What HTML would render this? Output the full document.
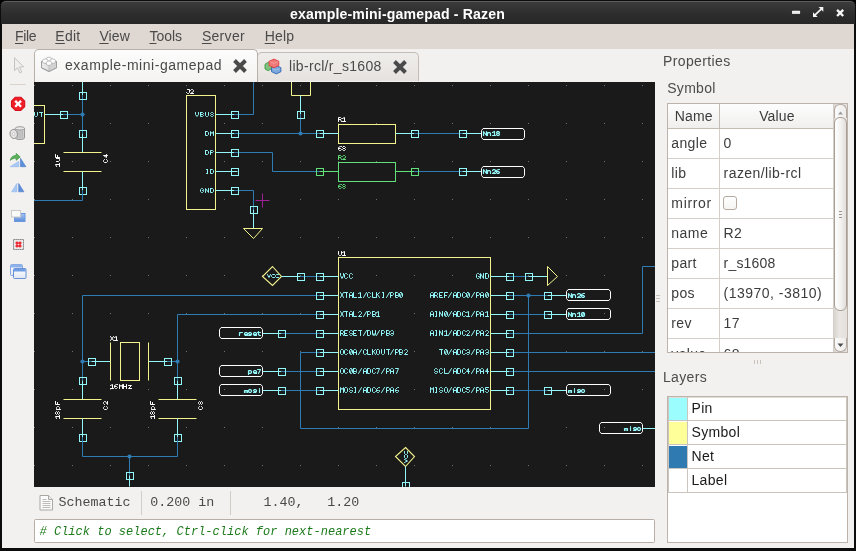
<!DOCTYPE html>
<html><head><meta charset="utf-8"><title>example-mini-gamepad - Razen</title>
<style>
*{box-sizing:border-box;margin:0;padding:0}
html,body{width:856px;height:551px;overflow:hidden;background:#000}
body{font-family:"Liberation Sans",sans-serif;font-size:14px;color:#3c3c3c;position:relative}
.abs{position:absolute}
#win{will-change:transform;position:absolute;left:0;top:0;width:856px;height:551px;background:#0c0c0c;border-radius:6px 6px 0 0;overflow:hidden}
#title{position:absolute;left:1px;top:1px;width:854px;height:23px;border-radius:5px 5px 0 0;background:linear-gradient(#3b3b3b,#2c2c2c 60%,#272727);border-top:1px solid #5c5c5c}
#title .t{position:absolute;left:0;width:793px;top:3.5px;text-align:center;color:#fff;font-weight:bold;font-size:14.1px;letter-spacing:0.15px;white-space:nowrap}
#menu{position:absolute;left:2px;top:24px;width:852px;height:25px;background:#dfd7d1}
#menu span{position:absolute;top:3.85px;font-size:14px;line-height:16px;color:#4a4a4a;white-space:nowrap}
#menu u{text-decoration:underline;text-decoration-thickness:1px;text-underline-offset:2px}
#body{position:absolute;left:2px;top:49px;width:852px;height:499px;background:#f2f1f0}
.txt{position:absolute;white-space:nowrap;color:#4a4a4a}
#cvwrap{position:absolute;left:34px;top:82px;width:621px;height:404.5px;background:#1a1a1a;overflow:hidden}
#cvwrap svg{display:block}
.tab{position:absolute;border:1px solid #b9b0a8;border-bottom:none;border-radius:5px 5px 0 0}
.cell{position:absolute;white-space:nowrap;color:#3c3c3c;font-size:14.6px}
</style></head><body>
<div id="win">
 <div id="title"><div class="t">example-mini-gamepad - Razen</div>
  <svg class="abs" style="left:788px;top:2px" width="64" height="18" viewBox="789 4 64 18">
   <defs><linearGradient id="mn" x1="0" y1="0" x2="0" y2="1"><stop offset="0" stop-color="#fbfbfb"/><stop offset="1" stop-color="#d4d4d4"/></linearGradient></defs>
   <rect x="792" y="10.8" width="8.100" height="3.300" rx="0.700" fill="url(#mn)"/>
   <g fill="#f6f6f6"><path d="M823.300 7h-4.700l4.700 4.700zM813 17h4.700l-4.700-4.700z"/></g>
   <path d="M821.200 9.100l-6.100 5.800" stroke="#f6f6f6" stroke-width="1.700"/>
   <path d="M837.100 9.900l6.100 6.100M843.200 9.900l-6.100 6.100" stroke="#f6f6f6" stroke-width="2.400"/>
  </svg>
 </div>
 <div id="menu">
  <span style="left:13px;letter-spacing:-0.31px"><u>F</u>ile</span>
  <span style="left:53.3px;letter-spacing:0.24px"><u>E</u>dit</span>
  <span style="left:97.4px;letter-spacing:0.13px"><u>V</u>iew</span>
  <span style="left:147.5px;letter-spacing:-0.03px"><u>T</u>ools</span>
  <span style="left:199.9px;letter-spacing:0.3px"><u>S</u>erver</span>
  <span style="left:262.7px;letter-spacing:0.18px"><u>H</u>elp</span>
 </div>
 <div id="body"></div>

 <!-- tabs -->
 <div class="tab" style="left:257px;top:52px;width:162px;height:29px;background:linear-gradient(#efedeb,#e6e2df);border-color:#c4bcb5"></div>
 <div class="tab" style="left:34px;top:49px;width:224px;height:33px;background:linear-gradient(#fcfcfc,#f4f3f2)"></div>
 <div class="txt" id="tab1" style="left:65px;top:56.65px;font-size:14px;line-height:16px;letter-spacing:0.54px">example-mini-gamepad</div>
 <div class="txt" id="tab2" style="left:289px;top:58.1px;font-size:14px;line-height:16px;letter-spacing:0.31px">lib-rcl/r_s1608</div>
 <svg class="abs" style="left:232px;top:59px" width="16" height="14" viewBox="0 0 16 14"><path d="M2.5 1.5l11 11M13.5 1.5l-11 11" stroke="#4a4a4a" stroke-width="3.9"/></svg>
 <svg class="abs" style="left:392px;top:60px" width="16" height="14" viewBox="0 0 16 14"><path d="M2.5 1.5l11 11M13.5 1.5l-11 11" stroke="#4a4a4a" stroke-width="3.9"/></svg>
 <svg class="abs" style="left:40px;top:56px" width="18" height="17" viewBox="40 56 18 17">
 <defs><linearGradient id="lg1" x1="0" y1="0" x2="1" y2="0"><stop offset="0" stop-color="#ededed"/><stop offset="1" stop-color="#cfcfcf"/></linearGradient></defs>
 <path d="M41.500 61.500l7.500-3.200 7.500 3.200v6.300l-7.500 3.700-7.500-3.700z" fill="url(#lg1)" stroke="#a9a9a9" stroke-width="1"/>
 <path d="M41.500 61.500l7.500 3.300 7.500-3.300-7.500-3.200z" fill="#f4f4f4" stroke="#b4b4b4" stroke-width=".6"/>
 <path d="M49 64.800l7.500-3.300v6.300l-7.500 3.700z" fill="#d2d2d2" stroke="none"/><path d="M49 64.800v6.700" stroke="#b4b4b4" stroke-width=".7"/><path d="M41.500 61.500l7.500-3.200 7.500 3.200v6.300l-7.500 3.700-7.500-3.700z" fill="none" stroke="#9f9f9f" stroke-width="1"/>
 <g fill="#fdfdfd" stroke="#a8a8a8" stroke-width=".7">
  <path d="M46.300 58.500v1.800a2.700 1.300 0 0 0 5.400 0v-1.800a2.700 1.300 0 0 0-5.400 0z"/>
  <path d="M42.600 60.300v1.800a2.700 1.300 0 0 0 5.400 0v-1.800a2.700 1.300 0 0 0-5.400 0z"/>
  <path d="M50 60.300v1.800a2.700 1.300 0 0 0 5.400 0v-1.800a2.700 1.300 0 0 0-5.400 0z"/>
  <path d="M46.300 62.300v1.800a2.700 1.300 0 0 0 5.400 0v-1.800a2.700 1.300 0 0 0-5.400 0z"/>
 </g>
</svg>
<svg class="abs" style="left:264px;top:58px" width="18" height="17" viewBox="264 58 18 17">
 <path d="M265 64.200l3.300-2 3.200 1.500v5l-3.300 2-3.200-1.700z" fill="#7fc07f" stroke="#3f9a45" stroke-width=".9"/>
 <path d="M271.500 68l5-2.300 4.400 2v4l-4.600 2.200-4.800-2.200z" fill="#7aa7dc" stroke="#2f66b3" stroke-width=".9"/>
 <path d="M269 61.300l5-2.200 4.800 2.200v4.200l-4.800 2.300-5-2.300z" fill="#f07a7a" stroke="#e03c3c" stroke-width=".9"/>
 <path d="M270 61.600l4 1.800 4-1.800" stroke="#f6a3a3" stroke-width=".8" fill="none"/>
 <path d="M272.500 68.600l3.400 1.500 4-1.700" stroke="#a9c7ea" stroke-width=".8" fill="none"/>
</svg>


 <svg class="abs" style="left:2px;top:50px" width="32" height="240" viewBox="2 50 32 240">
 <defs>
  <linearGradient id="tb1" x1="0" y1="0" x2="0" y2="1"><stop offset="0" stop-color="#a8c6f2"/><stop offset="1" stop-color="#5b8bd8"/></linearGradient>
  <linearGradient id="tb2" x1="0" y1="0" x2="0" y2="1"><stop offset="0" stop-color="#ffffff"/><stop offset="1" stop-color="#dfe6f3"/></linearGradient>
 </defs>
 <!-- pointer (insensitive) -->
 <path d="M14.500 57.800v12.800l3-2.800 2.300 5.100 2-.9-2.300-5 4.200-.2z" fill="#f0efee" stroke="#c5c3c1" stroke-width="1"/>
 <!-- separator -->
 <path d="M10 84.500h16" stroke="#d9d3cc"/>
 <!-- stop -->
 <path d="M15.37 97.20L20.83 97.20L24.70 101.07L24.70 106.53L20.83 110.40L15.37 110.40L11.50 106.53L11.50 101.07Z" fill="#ef2029" stroke="#d80f19" stroke-width="1.1" stroke-linejoin="round"/>
 <path d="M15.200 100.900l5.800 5.800M21 100.900l-5.800 5.800" stroke="#fff" stroke-width="2.300"/>
 <!-- trash -->
 <path d="M15.300 128.500v9.300c0 1 1.800 1.700 4.600 1.700s4.600-.7 4.600-1.700v-9.300z" fill="#cfcfcf" stroke="#8e8e8e" stroke-width=".9"/>
 <ellipse cx="19.900" cy="128.400" rx="4.700" ry="1.700" fill="#e9e9e9" stroke="#8e8e8e" stroke-width=".9"/>
 <path d="M17.800 131v7M20 131.300v7M22.200 131v7" stroke="#a6a6a6" stroke-width=".8"/>
 <ellipse cx="13.700" cy="134" rx="3.700" ry="4.600" fill="#e4e4e4" stroke="#8e8e8e" stroke-width=".9" transform="rotate(-12 13.700 134)"/>
 <ellipse cx="13.600" cy="134" rx="1.300" ry="1.700" fill="#f6f6f6" stroke="#b0b0b0" stroke-width=".5" transform="rotate(-12 13.600 134)"/>
 <!-- rotate -->
 <path d="M10.200 166.700h8.600v-5.300z" fill="#a9c8f4" stroke="#8db4ec" stroke-width=".6"/>
 <path d="M20.500 158.300v8.400h5.400z" fill="#5f8fdc" stroke="#4678c8" stroke-width=".6"/>
 <path d="M10.300 160.400c.5-3.600 3.300-5.100 5.900-4.900v-2.100l4 3.500-4 3.400v-2c-2-.2-4.100.4-5.900 2.100z" fill="#5cb35c" stroke="#3c9440" stroke-width=".7"/>
 <!-- mirror -->
 <path d="M11.700 191.800h5.200v-8.300z" fill="#a9c8f4" stroke="#8db4ec" stroke-width=".6"/>
 <path d="M18.700 183.500v8.300h5.200z" fill="#5f8fdc" stroke="#4678c8" stroke-width=".6"/>
 <!-- order -->
 <rect x="14.500" y="213.500" width="10.500" height="8" fill="url(#tb1)" stroke="#6a97e0" stroke-width="1"/>
 <rect x="11.500" y="210.500" width="9" height="6.500" fill="#fafafa" stroke="#c9c9c9" stroke-width="1"/>
 <!-- select area -->
 <rect x="13.500" y="239.500" width="10" height="10" fill="#e9e9e9" stroke="#666" stroke-width="1" stroke-dasharray="1.200 0.800"/>
 <path d="M15.500 243h6M15.500 246h6M17 241.500v6M20 241.500v6" stroke="#ee1c24" stroke-width="1.300"/>
 <!-- windows -->
 <rect x="10.500" y="264.500" width="12" height="11" rx="1" fill="url(#tb2)" stroke="#7da3e0" stroke-width=".9"/>
 <rect x="11" y="265" width="11" height="2.500" fill="#8db1ea"/>
 <rect x="13.500" y="268.500" width="12.500" height="10" rx="1" fill="url(#tb2)" stroke="#5b88d2" stroke-width=".9"/>
 <rect x="14" y="269" width="11.500" height="2.500" fill="#6f9ce2"/>
</svg>


 <div id="cvwrap"><svg id="cv" viewBox="34 82 621 404.5" width="621" height="404.5" fill="none" stroke-width="1" font-family="Liberation Mono, monospace" font-size="9.2" stroke-linecap="butt" stroke-linejoin="miter">
<path d="M34 85h1v1h-1zM34 123h1v1h-1zM34 161h1v1h-1zM34 199h1v1h-1zM34 237h1v1h-1zM34 275h1v1h-1zM34 313h1v1h-1zM34 351h1v1h-1zM34 389h1v1h-1zM34 427h1v1h-1zM34 465h1v1h-1zM72 85h1v1h-1zM72 123h1v1h-1zM72 161h1v1h-1zM72 199h1v1h-1zM72 237h1v1h-1zM72 275h1v1h-1zM72 313h1v1h-1zM72 351h1v1h-1zM72 389h1v1h-1zM72 427h1v1h-1zM72 465h1v1h-1zM110 85h1v1h-1zM110 123h1v1h-1zM110 161h1v1h-1zM110 199h1v1h-1zM110 237h1v1h-1zM110 275h1v1h-1zM110 313h1v1h-1zM110 351h1v1h-1zM110 389h1v1h-1zM110 427h1v1h-1zM110 465h1v1h-1zM148 85h1v1h-1zM148 123h1v1h-1zM148 161h1v1h-1zM148 199h1v1h-1zM148 237h1v1h-1zM148 275h1v1h-1zM148 313h1v1h-1zM148 351h1v1h-1zM148 389h1v1h-1zM148 427h1v1h-1zM148 465h1v1h-1zM186 85h1v1h-1zM186 123h1v1h-1zM186 161h1v1h-1zM186 199h1v1h-1zM186 237h1v1h-1zM186 275h1v1h-1zM186 313h1v1h-1zM186 351h1v1h-1zM186 389h1v1h-1zM186 427h1v1h-1zM186 465h1v1h-1zM224 85h1v1h-1zM224 123h1v1h-1zM224 161h1v1h-1zM224 199h1v1h-1zM224 237h1v1h-1zM224 275h1v1h-1zM224 313h1v1h-1zM224 351h1v1h-1zM224 389h1v1h-1zM224 427h1v1h-1zM224 465h1v1h-1zM262 85h1v1h-1zM262 123h1v1h-1zM262 161h1v1h-1zM262 199h1v1h-1zM262 237h1v1h-1zM262 275h1v1h-1zM262 313h1v1h-1zM262 351h1v1h-1zM262 389h1v1h-1zM262 427h1v1h-1zM262 465h1v1h-1zM300 85h1v1h-1zM300 123h1v1h-1zM300 161h1v1h-1zM300 199h1v1h-1zM300 237h1v1h-1zM300 275h1v1h-1zM300 313h1v1h-1zM300 351h1v1h-1zM300 389h1v1h-1zM300 427h1v1h-1zM300 465h1v1h-1zM338 85h1v1h-1zM338 123h1v1h-1zM338 161h1v1h-1zM338 199h1v1h-1zM338 237h1v1h-1zM338 275h1v1h-1zM338 313h1v1h-1zM338 351h1v1h-1zM338 389h1v1h-1zM338 427h1v1h-1zM338 465h1v1h-1zM376 85h1v1h-1zM376 123h1v1h-1zM376 161h1v1h-1zM376 199h1v1h-1zM376 237h1v1h-1zM376 275h1v1h-1zM376 313h1v1h-1zM376 351h1v1h-1zM376 389h1v1h-1zM376 427h1v1h-1zM376 465h1v1h-1zM414 85h1v1h-1zM414 123h1v1h-1zM414 161h1v1h-1zM414 199h1v1h-1zM414 237h1v1h-1zM414 275h1v1h-1zM414 313h1v1h-1zM414 351h1v1h-1zM414 389h1v1h-1zM414 427h1v1h-1zM414 465h1v1h-1zM452 85h1v1h-1zM452 123h1v1h-1zM452 161h1v1h-1zM452 199h1v1h-1zM452 237h1v1h-1zM452 275h1v1h-1zM452 313h1v1h-1zM452 351h1v1h-1zM452 389h1v1h-1zM452 427h1v1h-1zM452 465h1v1h-1zM490 85h1v1h-1zM490 123h1v1h-1zM490 161h1v1h-1zM490 199h1v1h-1zM490 237h1v1h-1zM490 275h1v1h-1zM490 313h1v1h-1zM490 351h1v1h-1zM490 389h1v1h-1zM490 427h1v1h-1zM490 465h1v1h-1zM528 85h1v1h-1zM528 123h1v1h-1zM528 161h1v1h-1zM528 199h1v1h-1zM528 237h1v1h-1zM528 275h1v1h-1zM528 313h1v1h-1zM528 351h1v1h-1zM528 389h1v1h-1zM528 427h1v1h-1zM528 465h1v1h-1zM566 85h1v1h-1zM566 123h1v1h-1zM566 161h1v1h-1zM566 199h1v1h-1zM566 237h1v1h-1zM566 275h1v1h-1zM566 313h1v1h-1zM566 351h1v1h-1zM566 389h1v1h-1zM566 427h1v1h-1zM566 465h1v1h-1zM604 85h1v1h-1zM604 123h1v1h-1zM604 161h1v1h-1zM604 199h1v1h-1zM604 237h1v1h-1zM604 275h1v1h-1zM604 313h1v1h-1zM604 351h1v1h-1zM604 389h1v1h-1zM604 427h1v1h-1zM604 465h1v1h-1zM642 85h1v1h-1zM642 123h1v1h-1zM642 161h1v1h-1zM642 199h1v1h-1zM642 237h1v1h-1zM642 275h1v1h-1zM642 313h1v1h-1zM642 351h1v1h-1zM642 389h1v1h-1zM642 427h1v1h-1zM642 465h1v1h-1z" fill="#6e6e6e" stroke="none"/>
<rect x="20" y="105.5" width="24.5" height="38" stroke="#f4f48e"/>
<path d="M30.5 112.5L31.5 112.5L32.5 113.5L32.5 115.5L31.5 116.5L30.5 116.5L29.5 115.5L29.5 113.5L30.5 112.5M34.5 112.5L34.5 115.5L35.5 116.5L36.5 116.5L37.5 115.5L37.5 112.5M39.5 112.5L42.5 112.5M41.5 112.5L41.5 116.5" stroke="#93f6f8" stroke-width="1" stroke-linecap="round" stroke-linejoin="round"/>
<path d="M44.5 114.5L63.5 114.5" stroke="#93f6f8" stroke-width="1"/>
<path d="M63.5 114.5L82.5 114.5" stroke="#2f7bb4" stroke-width="1"/>
<path d="M82.5 82L82.5 95.5" stroke="#93f6f8" stroke-width="1"/>
<path d="M82.5 95.5L82.5 133.5" stroke="#2f7bb4" stroke-width="1"/>
<path d="M82.5 133.5L82.5 152.5" stroke="#93f6f8" stroke-width="1"/>
<circle cx="82.5" cy="114.5" r="2.1" fill="#2f7bb4" stroke="none"/>
<rect x="60.5" y="111.5" width="7" height="7" stroke="#93f6f8"/>
<rect x="79.5" y="92.5" width="7" height="7" stroke="#93f6f8"/>
<rect x="79.5" y="130.5" width="7" height="7" stroke="#93f6f8"/>
<path d="M63.5 152.5L101.5 152.5" stroke="#f4f48e" stroke-width="1"/>
<path d="M63.5 171.5L101.5 171.5" stroke="#f4f48e" stroke-width="1"/>
<path d="M51.5 159.5L53.5 158.5L53.5 162.5M51.5 162.5L54.5 162.5M56.5 159.5L56.5 161.5L57.5 162.5L58.5 162.5L59.5 161.5M59.5 159.5L59.5 162.5M63.5 158.5L60.5 158.5L60.5 162.5M60.5 160.5L62.5 160.5" stroke="#ffffff" stroke-width="1" stroke-linecap="round" stroke-linejoin="round" transform="rotate(-90 57.5 160.5)"/>
<path d="M108.5 161.5L107.5 160.5L106.5 160.5L105.5 161.5L105.5 163.5L106.5 164.5L107.5 164.5L108.5 163.5M112.5 164.5L112.5 160.5L110.5 163.5L113.5 163.5" stroke="#ffffff" stroke-width="1" stroke-linecap="round" stroke-linejoin="round" transform="rotate(-90 105.5 162.5)"/>
<path d="M82.5 171.5L82.5 190.5" stroke="#93f6f8" stroke-width="1"/>
<rect x="79.5" y="187.5" width="7" height="7" stroke="#93f6f8"/>
<path d="M82.5 190.5L82.5 200.5L34 200.5" stroke="#2f7bb4" stroke-width="1"/>
<rect x="186.5" y="95.5" width="29" height="114" stroke="#f4f48e"/>
<path d="M187.5 89.5L189.5 89.5L189.5 92.5L188.5 93.5L187.5 93.5L186.5 92.5M190.5 90.5L191.5 89.5L192.5 89.5L193.5 90.5L193.5 91.5L190.5 93.5L193.5 93.5" stroke="#ffffff" stroke-width="1" stroke-linecap="round" stroke-linejoin="round"/>
<path d="M195.5 112.5L195.5 114.5L197 116.5L198.5 114.5L198.5 112.5M200.5 112.5L200.5 116.5L202.5 116.5L203.5 115.5L202.5 114.5L200.5 114.5M202.5 114.5L203.5 113.5L202.5 112.5L200.5 112.5M205.5 112.5L205.5 115.5L206.5 116.5L207.5 116.5L208.5 115.5L208.5 112.5M213.5 113.5L212.5 112.5L211.5 112.5L210.5 113.5L211.5 114.5L212.5 114.5L213.5 115.5L212.5 116.5L211.5 116.5L210.5 115.5" stroke="#93f6f8" stroke-width="1" stroke-linecap="round" stroke-linejoin="round"/>
<path d="M215.5 114.5L234.5 114.5" stroke="#93f6f8" stroke-width="1"/>
<path d="M205.5 131.5L205.5 135.5L207.5 135.5L208.5 134.5L208.5 132.5L207.5 131.5L205.5 131.5M210.5 135.5L210.5 131.5L212 133.5L213.5 131.5L213.5 135.5" stroke="#93f6f8" stroke-width="1" stroke-linecap="round" stroke-linejoin="round"/>
<path d="M215.5 133.5L234.5 133.5" stroke="#93f6f8" stroke-width="1"/>
<path d="M205.5 150.5L205.5 154.5L207.5 154.5L208.5 153.5L208.5 151.5L207.5 150.5L205.5 150.5M210.5 154.5L210.5 150.5L212.5 150.5L213.5 151.5L212.5 152.5L210.5 152.5" stroke="#93f6f8" stroke-width="1" stroke-linecap="round" stroke-linejoin="round"/>
<path d="M215.5 152.5L234.5 152.5" stroke="#93f6f8" stroke-width="1"/>
<path d="M206.5 169.5L207.5 169.5M207.5 169.5L207.5 173.5M206.5 173.5L207.5 173.5M210.5 169.5L210.5 173.5L212.5 173.5L213.5 172.5L213.5 170.5L212.5 169.5L210.5 169.5" stroke="#93f6f8" stroke-width="1" stroke-linecap="round" stroke-linejoin="round"/>
<path d="M215.5 171.5L234.5 171.5" stroke="#93f6f8" stroke-width="1"/>
<path d="M203.5 189.5L202.5 188.5L201.5 188.5L200.5 189.5L200.5 191.5L201.5 192.5L202.5 192.5L203.5 191.5L203.5 190.5L202.5 190.5M205.5 192.5L205.5 188.5L208.5 192.5L208.5 188.5M210.5 188.5L210.5 192.5L212.5 192.5L213.5 191.5L213.5 189.5L212.5 188.5L210.5 188.5" stroke="#93f6f8" stroke-width="1" stroke-linecap="round" stroke-linejoin="round"/>
<path d="M215.5 190.5L234.5 190.5" stroke="#93f6f8" stroke-width="1"/>
<path d="M234.5 114.5L253.5 114.5L253.5 82" stroke="#2f7bb4" stroke-width="1"/>
<path d="M234.5 133.5L319.5 133.5" stroke="#2f7bb4" stroke-width="1"/>
<path d="M234.5 152.5L272.5 152.5L272.5 171.5L319.5 171.5" stroke="#2f7bb4" stroke-width="1"/>
<path d="M234.5 190.5L253.5 190.5L253.5 209.5" stroke="#2f7bb4" stroke-width="1"/>
<rect x="231.5" y="111.5" width="7" height="7" stroke="#93f6f8"/>
<rect x="231.5" y="130.5" width="7" height="7" stroke="#93f6f8"/>
<rect x="231.5" y="149.5" width="7" height="7" stroke="#93f6f8"/>
<rect x="231.5" y="168.5" width="7" height="7" stroke="#93f6f8"/>
<rect x="231.5" y="187.5" width="7" height="7" stroke="#93f6f8"/>
<path d="M233.5 171.5L237.5 171.5" stroke="#93f6f8" stroke-width="1"/>
<path d="M291.5 82L291.5 95.5L310.5 95.5L310.5 82" stroke="#f4f48e" stroke-width="1"/>
<path d="M300.5 95.5L300.5 114.5" stroke="#93f6f8" stroke-width="1"/>
<path d="M300.5 114.5L300.5 133.5" stroke="#2f7bb4" stroke-width="1"/>
<rect x="297.5" y="111.5" width="7" height="7" stroke="#93f6f8"/>
<circle cx="300.5" cy="133.5" r="2.1" fill="#2f7bb4" stroke="none"/>
<path d="M253.5 209.5L253.5 228.5" stroke="#93f6f8" stroke-width="1"/>
<rect x="250.5" y="206.5" width="7" height="7" stroke="#93f6f8"/>
<path d="M243.5 228.5L262.5 228.5L253.5 238.5Z" stroke="#f4f48e" stroke-width="1"/>
<path d="M255.5 200.5L269.5 200.5" stroke="#a0209a" stroke-width="1"/>
<path d="M262.5 193.5L262.5 207.5" stroke="#a0209a" stroke-width="1"/>
<rect x="338.5" y="124.5" width="57" height="19" stroke="#f4f48e"/>
<path d="M338.5 121.5L338.5 117.5L340.5 117.5L341.5 118.5L340.5 119.5L338.5 119.5M340.5 119.5L341.5 121.5M342.5 118.5L344.5 117.5L344.5 121.5M342.5 121.5L345.5 121.5" stroke="#ffffff" stroke-width="1" stroke-linecap="round" stroke-linejoin="round"/>
<path d="M341.5 146.5L340.5 146.5L338.5 147.5L338.5 149.5L339.5 150.5L340.5 150.5L341.5 149.5L340.5 148.5L338.5 148.5M343.5 146.5L344.5 146.5L345.5 147.5L344.5 148.5L343.5 148.5L342.5 147.5L343.5 146.5M343.5 148.5L342.5 149.5L343.5 150.5L344.5 150.5L345.5 149.5L344.5 148.5" stroke="#ffffff" stroke-width="1" stroke-linecap="round" stroke-linejoin="round"/>
<path d="M319.5 133.5L338.5 133.5" stroke="#93f6f8" stroke-width="1"/>
<path d="M395.5 133.5L414.5 133.5" stroke="#93f6f8" stroke-width="1"/>
<path d="M414.5 133.5L462.5 133.5" stroke="#2f7bb4" stroke-width="1"/>
<path d="M462.5 133.5L481.5 133.5" stroke="#93f6f8" stroke-width="1"/>
<rect x="316.5" y="130.5" width="7" height="7" stroke="#93f6f8"/>
<rect x="411.5" y="130.5" width="7" height="7" stroke="#93f6f8"/>
<rect x="459.5" y="130.5" width="7" height="7" stroke="#93f6f8"/>
<path d="M483.1 128.5L522.9 128.5L524.5 130.6L524.5 137.4L522.9 139.5L483.1 139.5L481.5 137.4L481.5 130.6Z" stroke="#ffffff" stroke-linejoin="round"/>
<path d="M483.5 135.5L483.5 131.5L486.5 135.5L486.5 131.5M487.5 135.5L487.5 132.5M487.5 133.5L488.5 132.5L489.5 132.5L490.5 133.5L490.5 135.5M492.5 132.5L494.5 131.5L494.5 135.5M492.5 135.5L495.5 135.5M497.5 131.5L498.5 131.5L499.5 132.5L498.5 133.5L497.5 133.5L496.5 132.5L497.5 131.5M497.5 133.5L496.5 134.5L497.5 135.5L498.5 135.5L499.5 134.5L498.5 133.5" stroke="#93f6f8" stroke-width="1.2" stroke-linecap="round" stroke-linejoin="round"/>
<rect x="338.5" y="162.5" width="57" height="19" stroke="#62e07a"/>
<path d="M338.5 159.5L338.5 155.5L340.5 155.5L341.5 156.5L340.5 157.5L338.5 157.5M340.5 157.5L341.5 159.5M342.5 156.5L343.5 155.5L344.5 155.5L345.5 156.5L345.5 157.5L342.5 159.5L345.5 159.5" stroke="#62e07a" stroke-width="1" stroke-linecap="round" stroke-linejoin="round"/>
<path d="M341.5 184.5L340.5 184.5L338.5 185.5L338.5 187.5L339.5 188.5L340.5 188.5L341.5 187.5L340.5 186.5L338.5 186.5M343.5 184.5L344.5 184.5L345.5 185.5L344.5 186.5L343.5 186.5L342.5 185.5L343.5 184.5M343.5 186.5L342.5 187.5L343.5 188.5L344.5 188.5L345.5 187.5L344.5 186.5" stroke="#62e07a" stroke-width="1" stroke-linecap="round" stroke-linejoin="round"/>
<path d="M319.5 171.5L338.5 171.5" stroke="#62e07a" stroke-width="1"/>
<path d="M395.5 171.5L414.5 171.5" stroke="#62e07a" stroke-width="1"/>
<path d="M414.5 171.5L462.5 171.5" stroke="#2f7bb4" stroke-width="1"/>
<path d="M462.5 171.5L481.5 171.5" stroke="#93f6f8" stroke-width="1"/>
<rect x="316.5" y="168.5" width="7" height="7" stroke="#62e07a"/>
<rect x="411.5" y="168.5" width="7" height="7" stroke="#62e07a"/>
<rect x="459.5" y="168.5" width="7" height="7" stroke="#93f6f8"/>
<path d="M483.1 166.5L522.9 166.5L524.5 168.6L524.5 175.4L522.9 177.5L483.1 177.5L481.5 175.4L481.5 168.6Z" stroke="#ffffff" stroke-linejoin="round"/>
<path d="M483.5 173.5L483.5 169.5L486.5 173.5L486.5 169.5M487.5 173.5L487.5 170.5M487.5 171.5L488.5 170.5L489.5 170.5L490.5 171.5L490.5 173.5M492.5 170.5L493.5 169.5L494.5 169.5L495.5 170.5L495.5 171.5L492.5 173.5L495.5 173.5M499.5 169.5L498.5 169.5L496.5 170.5L496.5 172.5L497.5 173.5L498.5 173.5L499.5 172.5L498.5 171.5L496.5 171.5" stroke="#93f6f8" stroke-width="1.2" stroke-linecap="round" stroke-linejoin="round"/>
<rect x="338.5" y="257.5" width="152" height="152" stroke="#f4f48e"/>
<path d="M338.5 251.5L338.5 254.5L339.5 255.5L340.5 255.5L341.5 254.5L341.5 251.5M342.5 252.5L344.5 251.5L344.5 255.5M342.5 255.5L345.5 255.5" stroke="#ffffff" stroke-width="1" stroke-linecap="round" stroke-linejoin="round"/>
<path d="M340.5 273.5L340.5 275.5L342 278.5L343.5 275.5L343.5 273.5M347.5 274.5L346.5 273.5L345.5 273.5L344.5 274.5L344.5 277.5L345.5 278.5L346.5 278.5L347.5 277.5M352.5 274.5L351.5 273.5L350.5 273.5L349.5 274.5L349.5 277.5L350.5 278.5L351.5 278.5L352.5 277.5" stroke="#93f6f8" stroke-width="1" stroke-linecap="round" stroke-linejoin="round"/>
<path d="M479.5 274.5L478.5 273.5L477.5 273.5L476.5 274.5L476.5 277.5L477.5 278.5L478.5 278.5L479.5 277.5L479.5 276.5L478.5 276.5M480.5 278.5L480.5 273.5L483.5 278.5L483.5 273.5M485.5 273.5L485.5 278.5L487.5 278.5L488.5 277.5L488.5 274.5L487.5 273.5L485.5 273.5" stroke="#93f6f8" stroke-width="1" stroke-linecap="round" stroke-linejoin="round"/>
<path d="M319.5 276.5L338.5 276.5" stroke="#93f6f8" stroke-width="1"/>
<path d="M490.5 276.5L509.5 276.5" stroke="#93f6f8" stroke-width="1"/>
<path d="M340.5 292.5L343.5 297.5M343.5 292.5L340.5 297.5M344.5 292.5L347.5 292.5M346.5 292.5L346.5 297.5M349.5 297.5L349.5 293.5L350.5 292.5L351.5 292.5L352.5 293.5L352.5 297.5M349.5 295.5L352.5 295.5M353.5 292.5L353.5 297.5L356.5 297.5M358.5 293.5L360.5 292.5L360.5 297.5M358.5 297.5L361.5 297.5M363.5 297.5L366.5 292.5M370.5 293.5L369.5 292.5L368.5 292.5L367.5 293.5L367.5 296.5L368.5 297.5L369.5 297.5L370.5 296.5M372.5 292.5L372.5 297.5L375.5 297.5M376.5 292.5L376.5 297.5M379.5 292.5L376.5 295.5M377.5 294.5L379.5 297.5M382.5 292.5L383.5 292.5M383.5 292.5L383.5 297.5M382.5 297.5L383.5 297.5M386.5 297.5L389.5 292.5M390.5 297.5L390.5 292.5L392.5 292.5L393.5 293.5L393.5 294.5L392.5 295.5L390.5 295.5M395.5 292.5L395.5 297.5L397.5 297.5L398.5 296.5L398.5 295.5L397.5 295.5L395.5 295.5M397.5 295.5L398.5 294.5L398.5 293.5L397.5 292.5L395.5 292.5M400.5 292.5L401.5 292.5L402.5 293.5L402.5 296.5L401.5 297.5L400.5 297.5L399.5 296.5L399.5 293.5L400.5 292.5M400.5 296.5L401.5 293.5" stroke="#93f6f8" stroke-width="1" stroke-linecap="round" stroke-linejoin="round"/>
<path d="M430.5 297.5L430.5 293.5L431.5 292.5L432.5 292.5L433.5 293.5L433.5 297.5M430.5 295.5L433.5 295.5M434.5 297.5L434.5 292.5L436.5 292.5L437.5 293.5L437.5 294.5L436.5 295.5L434.5 295.5M436.5 295.5L437.5 297.5M442.5 292.5L439.5 292.5L439.5 297.5L442.5 297.5M439.5 295.5L441.5 295.5M447.5 292.5L444.5 292.5L444.5 297.5M444.5 295.5L446.5 295.5M448.5 297.5L451.5 292.5M453.5 297.5L453.5 293.5L454.5 292.5L455.5 292.5L456.5 293.5L456.5 297.5M453.5 295.5L456.5 295.5M457.5 292.5L457.5 297.5L459.5 297.5L460.5 296.5L460.5 293.5L459.5 292.5L457.5 292.5M465.5 293.5L464.5 292.5L463.5 292.5L462.5 293.5L462.5 296.5L463.5 297.5L464.5 297.5L465.5 296.5M467.5 292.5L468.5 292.5L469.5 293.5L469.5 296.5L468.5 297.5L467.5 297.5L466.5 296.5L466.5 293.5L467.5 292.5M467.5 296.5L468.5 293.5M471.5 297.5L474.5 292.5M476.5 297.5L476.5 292.5L478.5 292.5L479.5 293.5L479.5 294.5L478.5 295.5L476.5 295.5M480.5 297.5L480.5 293.5L481.5 292.5L482.5 292.5L483.5 293.5L483.5 297.5M480.5 295.5L483.5 295.5M486.5 292.5L487.5 292.5L488.5 293.5L488.5 296.5L487.5 297.5L486.5 297.5L485.5 296.5L485.5 293.5L486.5 292.5M486.5 296.5L487.5 293.5" stroke="#93f6f8" stroke-width="1" stroke-linecap="round" stroke-linejoin="round"/>
<path d="M319.5 295.5L338.5 295.5" stroke="#93f6f8" stroke-width="1"/>
<path d="M490.5 295.5L509.5 295.5" stroke="#93f6f8" stroke-width="1"/>
<path d="M340.5 311.5L343.5 316.5M343.5 311.5L340.5 316.5M344.5 311.5L347.5 311.5M346.5 311.5L346.5 316.5M349.5 316.5L349.5 312.5L350.5 311.5L351.5 311.5L352.5 312.5L352.5 316.5M349.5 314.5L352.5 314.5M353.5 311.5L353.5 316.5L356.5 316.5M358.5 312.5L359.5 311.5L360.5 311.5L361.5 312.5L361.5 313.5L358.5 316.5L361.5 316.5M363.5 316.5L366.5 311.5M367.5 316.5L367.5 311.5L369.5 311.5L370.5 312.5L370.5 313.5L369.5 314.5L367.5 314.5M372.5 311.5L372.5 316.5L374.5 316.5L375.5 315.5L375.5 314.5L374.5 314.5L372.5 314.5M374.5 314.5L375.5 313.5L375.5 312.5L374.5 311.5L372.5 311.5M376.5 312.5L378.5 311.5L378.5 316.5M376.5 316.5L379.5 316.5" stroke="#93f6f8" stroke-width="1" stroke-linecap="round" stroke-linejoin="round"/>
<path d="M430.5 316.5L430.5 312.5L431.5 311.5L432.5 311.5L433.5 312.5L433.5 316.5M430.5 314.5L433.5 314.5M435.5 311.5L436.5 311.5M436.5 311.5L436.5 316.5M435.5 316.5L436.5 316.5M439.5 316.5L439.5 311.5L442.5 316.5L442.5 311.5M445.5 311.5L446.5 311.5L447.5 312.5L447.5 315.5L446.5 316.5L445.5 316.5L444.5 315.5L444.5 312.5L445.5 311.5M445.5 315.5L446.5 312.5M448.5 316.5L451.5 311.5M453.5 316.5L453.5 312.5L454.5 311.5L455.5 311.5L456.5 312.5L456.5 316.5M453.5 314.5L456.5 314.5M457.5 311.5L457.5 316.5L459.5 316.5L460.5 315.5L460.5 312.5L459.5 311.5L457.5 311.5M465.5 312.5L464.5 311.5L463.5 311.5L462.5 312.5L462.5 315.5L463.5 316.5L464.5 316.5L465.5 315.5M466.5 312.5L468.5 311.5L468.5 316.5M466.5 316.5L469.5 316.5M471.5 316.5L474.5 311.5M476.5 316.5L476.5 311.5L478.5 311.5L479.5 312.5L479.5 313.5L478.5 314.5L476.5 314.5M480.5 316.5L480.5 312.5L481.5 311.5L482.5 311.5L483.5 312.5L483.5 316.5M480.5 314.5L483.5 314.5M485.5 312.5L487.5 311.5L487.5 316.5M485.5 316.5L488.5 316.5" stroke="#93f6f8" stroke-width="1" stroke-linecap="round" stroke-linejoin="round"/>
<path d="M319.5 314.5L338.5 314.5" stroke="#93f6f8" stroke-width="1"/>
<path d="M490.5 314.5L509.5 314.5" stroke="#93f6f8" stroke-width="1"/>
<path d="M340.5 335.5L340.5 330.5L342.5 330.5L343.5 331.5L343.5 332.5L342.5 333.5L340.5 333.5M342.5 333.5L343.5 335.5M347.5 330.5L344.5 330.5L344.5 335.5L347.5 335.5M344.5 333.5L346.5 333.5M352.5 331.5L351.5 330.5L350.5 330.5L349.5 331.5L349.5 332.5L350.5 333.5L351.5 333.5L352.5 333.5L352.5 334.5L351.5 335.5L350.5 335.5L349.5 334.5M356.5 330.5L353.5 330.5L353.5 335.5L356.5 335.5M353.5 333.5L355.5 333.5M358.5 330.5L361.5 330.5M360.5 330.5L360.5 335.5M363.5 335.5L366.5 330.5M367.5 330.5L367.5 335.5L369.5 335.5L370.5 334.5L370.5 331.5L369.5 330.5L367.5 330.5M372.5 330.5L372.5 334.5L373.25 335.5L374 333.5L374.75 335.5L375.5 334.5L375.5 330.5M376.5 335.5L379.5 330.5M381.5 335.5L381.5 330.5L383.5 330.5L384.5 331.5L384.5 332.5L383.5 333.5L381.5 333.5M386.5 330.5L386.5 335.5L388.5 335.5L389.5 334.5L389.5 333.5L388.5 333.5L386.5 333.5M388.5 333.5L389.5 332.5L389.5 331.5L388.5 330.5L386.5 330.5M390.5 331.5L391.5 330.5L392.5 330.5L393.5 331.5L393.5 332.5L392.5 333.5L391.5 333.5M392.5 333.5L393.5 333.5L393.5 334.5L392.5 335.5L391.5 335.5L390.5 334.5" stroke="#93f6f8" stroke-width="1" stroke-linecap="round" stroke-linejoin="round"/>
<path d="M430.5 335.5L430.5 331.5L431.5 330.5L432.5 330.5L433.5 331.5L433.5 335.5M430.5 333.5L433.5 333.5M435.5 330.5L436.5 330.5M436.5 330.5L436.5 335.5M435.5 335.5L436.5 335.5M439.5 335.5L439.5 330.5L442.5 335.5L442.5 330.5M444.5 331.5L446.5 330.5L446.5 335.5M444.5 335.5L447.5 335.5M448.5 335.5L451.5 330.5M453.5 335.5L453.5 331.5L454.5 330.5L455.5 330.5L456.5 331.5L456.5 335.5M453.5 333.5L456.5 333.5M457.5 330.5L457.5 335.5L459.5 335.5L460.5 334.5L460.5 331.5L459.5 330.5L457.5 330.5M465.5 331.5L464.5 330.5L463.5 330.5L462.5 331.5L462.5 334.5L463.5 335.5L464.5 335.5L465.5 334.5M466.5 331.5L467.5 330.5L468.5 330.5L469.5 331.5L469.5 332.5L466.5 335.5L469.5 335.5M471.5 335.5L474.5 330.5M476.5 335.5L476.5 330.5L478.5 330.5L479.5 331.5L479.5 332.5L478.5 333.5L476.5 333.5M480.5 335.5L480.5 331.5L481.5 330.5L482.5 330.5L483.5 331.5L483.5 335.5M480.5 333.5L483.5 333.5M485.5 331.5L486.5 330.5L487.5 330.5L488.5 331.5L488.5 332.5L485.5 335.5L488.5 335.5" stroke="#93f6f8" stroke-width="1" stroke-linecap="round" stroke-linejoin="round"/>
<path d="M319.5 333.5L338.5 333.5" stroke="#93f6f8" stroke-width="1"/>
<path d="M490.5 333.5L509.5 333.5" stroke="#93f6f8" stroke-width="1"/>
<path d="M341.5 349.5L342.5 349.5L343.5 350.5L343.5 353.5L342.5 354.5L341.5 354.5L340.5 353.5L340.5 350.5L341.5 349.5M347.5 350.5L346.5 349.5L345.5 349.5L344.5 350.5L344.5 353.5L345.5 354.5L346.5 354.5L347.5 353.5M350.5 349.5L351.5 349.5L352.5 350.5L352.5 353.5L351.5 354.5L350.5 354.5L349.5 353.5L349.5 350.5L350.5 349.5M350.5 353.5L351.5 350.5M353.5 354.5L353.5 350.5L354.5 349.5L355.5 349.5L356.5 350.5L356.5 354.5M353.5 352.5L356.5 352.5M358.5 354.5L361.5 349.5M366.5 350.5L365.5 349.5L364.5 349.5L363.5 350.5L363.5 353.5L364.5 354.5L365.5 354.5L366.5 353.5M367.5 349.5L367.5 354.5L370.5 354.5M372.5 349.5L372.5 354.5M375.5 349.5L372.5 352.5M373.5 351.5L375.5 354.5M377.5 349.5L378.5 349.5L379.5 350.5L379.5 353.5L378.5 354.5L377.5 354.5L376.5 353.5L376.5 350.5L377.5 349.5M381.5 349.5L381.5 353.5L382.5 354.5L383.5 354.5L384.5 353.5L384.5 349.5M386.5 349.5L389.5 349.5M388.5 349.5L388.5 354.5M390.5 354.5L393.5 349.5M395.5 354.5L395.5 349.5L397.5 349.5L398.5 350.5L398.5 351.5L397.5 352.5L395.5 352.5M399.5 349.5L399.5 354.5L401.5 354.5L402.5 353.5L402.5 352.5L401.5 352.5L399.5 352.5M401.5 352.5L402.5 351.5L402.5 350.5L401.5 349.5L399.5 349.5M404.5 350.5L405.5 349.5L406.5 349.5L407.5 350.5L407.5 351.5L404.5 354.5L407.5 354.5" stroke="#93f6f8" stroke-width="1" stroke-linecap="round" stroke-linejoin="round"/>
<path d="M439.5 349.5L442.5 349.5M441.5 349.5L441.5 354.5M445.5 349.5L446.5 349.5L447.5 350.5L447.5 353.5L446.5 354.5L445.5 354.5L444.5 353.5L444.5 350.5L445.5 349.5M445.5 353.5L446.5 350.5M448.5 354.5L451.5 349.5M453.5 354.5L453.5 350.5L454.5 349.5L455.5 349.5L456.5 350.5L456.5 354.5M453.5 352.5L456.5 352.5M457.5 349.5L457.5 354.5L459.5 354.5L460.5 353.5L460.5 350.5L459.5 349.5L457.5 349.5M465.5 350.5L464.5 349.5L463.5 349.5L462.5 350.5L462.5 353.5L463.5 354.5L464.5 354.5L465.5 353.5M466.5 350.5L467.5 349.5L468.5 349.5L469.5 350.5L469.5 351.5L468.5 352.5L467.5 352.5M468.5 352.5L469.5 352.5L469.5 353.5L468.5 354.5L467.5 354.5L466.5 353.5M471.5 354.5L474.5 349.5M476.5 354.5L476.5 349.5L478.5 349.5L479.5 350.5L479.5 351.5L478.5 352.5L476.5 352.5M480.5 354.5L480.5 350.5L481.5 349.5L482.5 349.5L483.5 350.5L483.5 354.5M480.5 352.5L483.5 352.5M485.5 350.5L486.5 349.5L487.5 349.5L488.5 350.5L488.5 351.5L487.5 352.5L486.5 352.5M487.5 352.5L488.5 352.5L488.5 353.5L487.5 354.5L486.5 354.5L485.5 353.5" stroke="#93f6f8" stroke-width="1" stroke-linecap="round" stroke-linejoin="round"/>
<path d="M319.5 352.5L338.5 352.5" stroke="#93f6f8" stroke-width="1"/>
<path d="M490.5 352.5L509.5 352.5" stroke="#93f6f8" stroke-width="1"/>
<path d="M341.5 368.5L342.5 368.5L343.5 369.5L343.5 372.5L342.5 373.5L341.5 373.5L340.5 372.5L340.5 369.5L341.5 368.5M347.5 369.5L346.5 368.5L345.5 368.5L344.5 369.5L344.5 372.5L345.5 373.5L346.5 373.5L347.5 372.5M350.5 368.5L351.5 368.5L352.5 369.5L352.5 372.5L351.5 373.5L350.5 373.5L349.5 372.5L349.5 369.5L350.5 368.5M350.5 372.5L351.5 369.5M353.5 368.5L353.5 373.5L355.5 373.5L356.5 372.5L356.5 371.5L355.5 371.5L353.5 371.5M355.5 371.5L356.5 370.5L356.5 369.5L355.5 368.5L353.5 368.5M358.5 373.5L361.5 368.5M363.5 373.5L363.5 369.5L364.5 368.5L365.5 368.5L366.5 369.5L366.5 373.5M363.5 371.5L366.5 371.5M367.5 368.5L367.5 373.5L369.5 373.5L370.5 372.5L370.5 369.5L369.5 368.5L367.5 368.5M375.5 369.5L374.5 368.5L373.5 368.5L372.5 369.5L372.5 372.5L373.5 373.5L374.5 373.5L375.5 372.5M376.5 368.5L379.5 368.5L377.5 373.5M381.5 373.5L384.5 368.5M386.5 373.5L386.5 368.5L388.5 368.5L389.5 369.5L389.5 370.5L388.5 371.5L386.5 371.5M390.5 373.5L390.5 369.5L391.5 368.5L392.5 368.5L393.5 369.5L393.5 373.5M390.5 371.5L393.5 371.5M395.5 368.5L398.5 368.5L396.5 373.5" stroke="#93f6f8" stroke-width="1" stroke-linecap="round" stroke-linejoin="round"/>
<path d="M437.5 369.5L436.5 368.5L435.5 368.5L434.5 369.5L434.5 370.5L435.5 371.5L436.5 371.5L437.5 371.5L437.5 372.5L436.5 373.5L435.5 373.5L434.5 372.5M442.5 369.5L441.5 368.5L440.5 368.5L439.5 369.5L439.5 372.5L440.5 373.5L441.5 373.5L442.5 372.5M444.5 368.5L444.5 373.5L447.5 373.5M448.5 373.5L451.5 368.5M453.5 373.5L453.5 369.5L454.5 368.5L455.5 368.5L456.5 369.5L456.5 373.5M453.5 371.5L456.5 371.5M457.5 368.5L457.5 373.5L459.5 373.5L460.5 372.5L460.5 369.5L459.5 368.5L457.5 368.5M465.5 369.5L464.5 368.5L463.5 368.5L462.5 369.5L462.5 372.5L463.5 373.5L464.5 373.5L465.5 372.5M468.5 373.5L468.5 368.5L466.5 371.5L469.5 371.5M471.5 373.5L474.5 368.5M476.5 373.5L476.5 368.5L478.5 368.5L479.5 369.5L479.5 370.5L478.5 371.5L476.5 371.5M480.5 373.5L480.5 369.5L481.5 368.5L482.5 368.5L483.5 369.5L483.5 373.5M480.5 371.5L483.5 371.5M487.5 373.5L487.5 368.5L485.5 371.5L488.5 371.5" stroke="#93f6f8" stroke-width="1" stroke-linecap="round" stroke-linejoin="round"/>
<path d="M319.5 371.5L338.5 371.5" stroke="#93f6f8" stroke-width="1"/>
<path d="M490.5 371.5L509.5 371.5" stroke="#93f6f8" stroke-width="1"/>
<path d="M340.5 392.5L340.5 387.5L342 389.5L343.5 387.5L343.5 392.5M345.5 387.5L346.5 387.5L347.5 388.5L347.5 391.5L346.5 392.5L345.5 392.5L344.5 391.5L344.5 388.5L345.5 387.5M352.5 388.5L351.5 387.5L350.5 387.5L349.5 388.5L349.5 389.5L350.5 390.5L351.5 390.5L352.5 390.5L352.5 391.5L351.5 392.5L350.5 392.5L349.5 391.5M354.5 387.5L355.5 387.5M355.5 387.5L355.5 392.5M354.5 392.5L355.5 392.5M358.5 392.5L361.5 387.5M363.5 392.5L363.5 388.5L364.5 387.5L365.5 387.5L366.5 388.5L366.5 392.5M363.5 390.5L366.5 390.5M367.5 387.5L367.5 392.5L369.5 392.5L370.5 391.5L370.5 388.5L369.5 387.5L367.5 387.5M375.5 388.5L374.5 387.5L373.5 387.5L372.5 388.5L372.5 391.5L373.5 392.5L374.5 392.5L375.5 391.5M379.5 387.5L378.5 387.5L376.5 389.5L376.5 391.5L377.5 392.5L378.5 392.5L379.5 391.5L379.5 390.5L378.5 390.5L376.5 390.5M381.5 392.5L384.5 387.5M386.5 392.5L386.5 387.5L388.5 387.5L389.5 388.5L389.5 389.5L388.5 390.5L386.5 390.5M390.5 392.5L390.5 388.5L391.5 387.5L392.5 387.5L393.5 388.5L393.5 392.5M390.5 390.5L393.5 390.5M398.5 387.5L397.5 387.5L395.5 389.5L395.5 391.5L396.5 392.5L397.5 392.5L398.5 391.5L398.5 390.5L397.5 390.5L395.5 390.5" stroke="#93f6f8" stroke-width="1" stroke-linecap="round" stroke-linejoin="round"/>
<path d="M430.5 392.5L430.5 387.5L432 389.5L433.5 387.5L433.5 392.5M435.5 387.5L436.5 387.5M436.5 387.5L436.5 392.5M435.5 392.5L436.5 392.5M442.5 388.5L441.5 387.5L440.5 387.5L439.5 388.5L439.5 389.5L440.5 390.5L441.5 390.5L442.5 390.5L442.5 391.5L441.5 392.5L440.5 392.5L439.5 391.5M445.5 387.5L446.5 387.5L447.5 388.5L447.5 391.5L446.5 392.5L445.5 392.5L444.5 391.5L444.5 388.5L445.5 387.5M448.5 392.5L451.5 387.5M453.5 392.5L453.5 388.5L454.5 387.5L455.5 387.5L456.5 388.5L456.5 392.5M453.5 390.5L456.5 390.5M457.5 387.5L457.5 392.5L459.5 392.5L460.5 391.5L460.5 388.5L459.5 387.5L457.5 387.5M465.5 388.5L464.5 387.5L463.5 387.5L462.5 388.5L462.5 391.5L463.5 392.5L464.5 392.5L465.5 391.5M469.5 387.5L466.5 387.5L466.5 389.5L468.5 389.5L469.5 390.5L469.5 391.5L468.5 392.5L467.5 392.5L466.5 391.5M471.5 392.5L474.5 387.5M476.5 392.5L476.5 387.5L478.5 387.5L479.5 388.5L479.5 389.5L478.5 390.5L476.5 390.5M480.5 392.5L480.5 388.5L481.5 387.5L482.5 387.5L483.5 388.5L483.5 392.5M480.5 390.5L483.5 390.5M488.5 387.5L485.5 387.5L485.5 389.5L487.5 389.5L488.5 390.5L488.5 391.5L487.5 392.5L486.5 392.5L485.5 391.5" stroke="#93f6f8" stroke-width="1" stroke-linecap="round" stroke-linejoin="round"/>
<path d="M319.5 390.5L338.5 390.5" stroke="#93f6f8" stroke-width="1"/>
<path d="M490.5 390.5L509.5 390.5" stroke="#93f6f8" stroke-width="1"/>
<path d="M272.5 266.5L281.5 276.5L272.5 285.5L262.5 276.5Z" stroke="#f4f48e" stroke-width="1.1"/>
<path d="M267.5 274.5L269 277.5L270.5 274.5M274.5 274.5L272.5 274.5L271.5 275.5L271.5 276.5L272.5 277.5L274.5 277.5M278.5 274.5L276.5 274.5L275.5 275.5L275.5 276.5L276.5 277.5L278.5 277.5" stroke="#93f6f8" stroke-width="1" stroke-linecap="round" stroke-linejoin="round"/>
<path d="M281.5 276.5L300.5 276.5" stroke="#93f6f8" stroke-width="1"/>
<path d="M300.5 276.5L319.5 276.5" stroke="#2f7bb4" stroke-width="1"/>
<rect x="297.5" y="273.5" width="7" height="7" stroke="#93f6f8"/>
<path d="M319.5 295.5L82.5 295.5L82.5 380.5" stroke="#2f7bb4" stroke-width="1"/>
<path d="M319.5 314.5L177.5 314.5L177.5 380.5" stroke="#2f7bb4" stroke-width="1"/>
<path d="M221.1 327.5L260.9 327.5L262.5 329.6L262.5 336.4L260.9 338.5L221.1 338.5L219.5 336.4L219.5 329.6Z" stroke="#ffffff" stroke-linejoin="round"/>
<path d="M239.5 332.5L239.5 335.5M239.5 333.5L240.5 332.5L242.5 332.5M244.5 334.5L247.5 334.5L247.5 333.5L246.5 332.5L245.5 332.5L244.5 333.5L244.5 334.5L245.5 335.5L246.5 335.5L247.5 335.5M251.5 333.5L250.5 332.5L249.5 332.5L248.5 333.5L249.5 334.5L250.5 334.5L251.5 334.5L250.5 335.5L249.5 335.5L248.5 335.5M253.5 334.5L256.5 334.5L256.5 333.5L255.5 332.5L254.5 332.5L253.5 333.5L253.5 334.5L254.5 335.5L255.5 335.5L256.5 335.5M258.5 331.5L258.5 334.5L259.5 335.5L260.5 335.5M257.5 332.5L260.5 332.5" stroke="#93f6f8" stroke-width="1.2" stroke-linecap="round" stroke-linejoin="round"/>
<path d="M262.5 333.5L281.5 333.5" stroke="#93f6f8" stroke-width="1"/>
<path d="M281.5 333.5L319.5 333.5" stroke="#2f7bb4" stroke-width="1"/>
<rect x="278.5" y="330.5" width="7" height="7" stroke="#93f6f8"/>
<path d="M221.1 365.5L260.9 365.5L262.5 367.6L262.5 374.4L260.9 376.5L221.1 376.5L219.5 374.4L219.5 367.6Z" stroke="#ffffff" stroke-linejoin="round"/>
<path d="M248.5 370.5L248.5 374.5M248.5 371.5L249.5 370.5L250.5 370.5L251.5 371.5L251.5 372.5L250.5 373.5L249.5 373.5L248.5 372.5M253.5 371.5L254.5 370.5L255.5 370.5L256.5 371.5L256.5 373.5M256.5 372.5L254.5 372.5L253.5 372.5L254.5 373.5L255.5 373.5L256.5 372.5M257.5 369.5L260.5 369.5L258.5 373.5" stroke="#93f6f8" stroke-width="1.2" stroke-linecap="round" stroke-linejoin="round"/>
<path d="M262.5 371.5L281.5 371.5" stroke="#93f6f8" stroke-width="1"/>
<path d="M281.5 371.5L319.5 371.5" stroke="#2f7bb4" stroke-width="1"/>
<rect x="278.5" y="368.5" width="7" height="7" stroke="#93f6f8"/>
<path d="M221.1 384.5L260.9 384.5L262.5 386.6L262.5 393.4L260.9 395.5L221.1 395.5L219.5 393.4L219.5 386.6Z" stroke="#ffffff" stroke-linejoin="round"/>
<path d="M244.5 392.5L244.5 390.5L245.5 390.5L246 390.5L246 392.5M246 390.5L246.5 390.5L247.5 390.5L247.5 392.5M249.5 389.5L250.5 389.5L251.5 390.5L251.5 391.5L250.5 392.5L249.5 392.5L248.5 391.5L248.5 390.5L249.5 389.5M256.5 390.5L255.5 389.5L254.5 389.5L253.5 390.5L254.5 391.5L255.5 391.5L256.5 391.5L255.5 392.5L254.5 392.5L253.5 392.5M259.5 389.5L259.5 392.5M259.5 388.5L259.51 388.5" stroke="#93f6f8" stroke-width="1.2" stroke-linecap="round" stroke-linejoin="round"/>
<path d="M262.5 390.5L281.5 390.5" stroke="#93f6f8" stroke-width="1"/>
<path d="M281.5 390.5L319.5 390.5" stroke="#2f7bb4" stroke-width="1"/>
<rect x="278.5" y="387.5" width="7" height="7" stroke="#93f6f8"/>
<path d="M319.5 352.5L300.5 352.5L300.5 428.5L528.5 428.5L528.5 295.5" stroke="#2f7bb4" stroke-width="1"/>
<rect x="316.5" y="273.5" width="7" height="7" stroke="#93f6f8"/>
<rect x="316.5" y="292.5" width="7" height="7" stroke="#93f6f8"/>
<rect x="316.5" y="311.5" width="7" height="7" stroke="#93f6f8"/>
<rect x="316.5" y="330.5" width="7" height="7" stroke="#93f6f8"/>
<rect x="316.5" y="349.5" width="7" height="7" stroke="#93f6f8"/>
<rect x="316.5" y="368.5" width="7" height="7" stroke="#93f6f8"/>
<rect x="316.5" y="387.5" width="7" height="7" stroke="#93f6f8"/>
<path d="M509.5 276.5L528.5 276.5" stroke="#2f7bb4" stroke-width="1"/>
<path d="M528.5 276.5L547.5 276.5" stroke="#93f6f8" stroke-width="1"/>
<rect x="525.5" y="273.5" width="7" height="7" stroke="#93f6f8"/>
<path d="M547.5 266.5L557.5 276.5L547.5 285.5Z" stroke="#f4f48e" stroke-width="1"/>
<path d="M509.5 295.5L547.5 295.5" stroke="#2f7bb4" stroke-width="1"/>
<circle cx="528.5" cy="295.5" r="2.1" fill="#2f7bb4" stroke="none"/>
<path d="M547.5 295.5L566.5 295.5" stroke="#93f6f8" stroke-width="1"/>
<rect x="544.5" y="292.5" width="7" height="7" stroke="#93f6f8"/>
<path d="M568.1 289.5L608.9 289.5L610.5 291.6L610.5 298.4L608.9 300.5L568.1 300.5L566.5 298.4L566.5 291.6Z" stroke="#ffffff" stroke-linejoin="round"/>
<path d="M568.5 297.5L568.5 293.5L571.5 297.5L571.5 293.5M572.5 297.5L572.5 294.5M572.5 295.5L573.5 294.5L574.5 294.5L575.5 295.5L575.5 297.5M577.5 294.5L578.5 293.5L579.5 293.5L580.5 294.5L580.5 295.5L577.5 297.5L580.5 297.5M584.5 293.5L583.5 293.5L581.5 294.5L581.5 296.5L582.5 297.5L583.5 297.5L584.5 296.5L583.5 295.5L581.5 295.5" stroke="#93f6f8" stroke-width="1.2" stroke-linecap="round" stroke-linejoin="round"/>
<path d="M509.5 314.5L547.5 314.5" stroke="#2f7bb4" stroke-width="1"/>
<path d="M547.5 314.5L566.5 314.5" stroke="#93f6f8" stroke-width="1"/>
<rect x="544.5" y="311.5" width="7" height="7" stroke="#93f6f8"/>
<path d="M568.1 308.5L608.9 308.5L610.5 310.6L610.5 317.4L608.9 319.5L568.1 319.5L566.5 317.4L566.5 310.6Z" stroke="#ffffff" stroke-linejoin="round"/>
<path d="M568.5 316.5L568.5 312.5L571.5 316.5L571.5 312.5M572.5 316.5L572.5 313.5M572.5 314.5L573.5 313.5L574.5 313.5L575.5 314.5L575.5 316.5M577.5 313.5L579.5 312.5L579.5 316.5M577.5 316.5L580.5 316.5M582.5 312.5L583.5 312.5L584.5 313.5L584.5 315.5L583.5 316.5L582.5 316.5L581.5 315.5L581.5 313.5L582.5 312.5M582.5 315.5L583.5 313.5" stroke="#93f6f8" stroke-width="1.2" stroke-linecap="round" stroke-linejoin="round"/>
<path d="M509.5 333.5L642.5 333.5L642.5 266.5L655 266.5" stroke="#2f7bb4" stroke-width="1"/>
<path d="M509.5 352.5L655 352.5" stroke="#2f7bb4" stroke-width="1"/>
<path d="M509.5 371.5L655 371.5" stroke="#2f7bb4" stroke-width="1"/>
<path d="M509.5 390.5L547.5 390.5" stroke="#2f7bb4" stroke-width="1"/>
<path d="M547.5 390.5L566.5 390.5" stroke="#93f6f8" stroke-width="1"/>
<rect x="544.5" y="387.5" width="7" height="7" stroke="#93f6f8"/>
<path d="M568.1 384.5L608.9 384.5L610.5 386.6L610.5 393.4L608.9 395.5L568.1 395.5L566.5 393.4L566.5 386.6Z" stroke="#ffffff" stroke-linejoin="round"/>
<path d="M568.5 392.5L568.5 390.5L569.5 390.5L570 390.5L570 392.5M570 390.5L570.5 390.5L571.5 390.5L571.5 392.5M574.5 389.5L574.5 392.5M574.5 388.5L574.51 388.5M580.5 390.5L579.5 389.5L578.5 389.5L577.5 390.5L578.5 391.5L579.5 391.5L580.5 391.5L579.5 392.5L578.5 392.5L577.5 392.5M582.5 389.5L583.5 389.5L584.5 390.5L584.5 391.5L583.5 392.5L582.5 392.5L581.5 391.5L581.5 390.5L582.5 389.5" stroke="#93f6f8" stroke-width="1.2" stroke-linecap="round" stroke-linejoin="round"/>
<rect x="506.5" y="273.5" width="7" height="7" stroke="#93f6f8"/>
<rect x="506.5" y="292.5" width="7" height="7" stroke="#93f6f8"/>
<rect x="506.5" y="311.5" width="7" height="7" stroke="#93f6f8"/>
<rect x="506.5" y="330.5" width="7" height="7" stroke="#93f6f8"/>
<rect x="506.5" y="349.5" width="7" height="7" stroke="#93f6f8"/>
<rect x="506.5" y="368.5" width="7" height="7" stroke="#93f6f8"/>
<rect x="506.5" y="387.5" width="7" height="7" stroke="#93f6f8"/>
<path d="M601.1 422.5L640.9 422.5L642.5 424.6L642.5 431.4L640.9 433.5L601.1 433.5L599.5 431.4L599.5 424.6Z" stroke="#ffffff" stroke-linejoin="round"/>
<path d="M624.5 430.5L624.5 428.5L625.5 428.5L626 428.5L626 430.5M626 428.5L626.5 428.5L627.5 428.5L627.5 430.5M630.5 427.5L630.5 430.5M630.5 426.5L630.51 426.5M636.5 428.5L635.5 427.5L634.5 427.5L633.5 428.5L634.5 429.5L635.5 429.5L636.5 429.5L635.5 430.5L634.5 430.5L633.5 430.5M638.5 427.5L639.5 427.5L640.5 428.5L640.5 429.5L639.5 430.5L638.5 430.5L637.5 429.5L637.5 428.5L638.5 427.5" stroke="#93f6f8" stroke-width="1.2" stroke-linecap="round" stroke-linejoin="round"/>
<path d="M642.5 428.5L655 428.5" stroke="#93f6f8" stroke-width="1"/>
<path d="M82.5 361.5L91.5 361.5" stroke="#2f7bb4" stroke-width="1"/>
<path d="M91.5 361.5L110.5 361.5" stroke="#93f6f8" stroke-width="1"/>
<path d="M148.5 361.5L167.5 361.5" stroke="#93f6f8" stroke-width="1"/>
<path d="M167.5 361.5L177.5 361.5" stroke="#2f7bb4" stroke-width="1"/>
<path d="M110.5 342.5L110.5 380.5" stroke="#f4f48e" stroke-width="1"/>
<path d="M148.5 342.5L148.5 380.5" stroke="#f4f48e" stroke-width="1"/>
<rect x="120.5" y="342.5" width="19" height="38" stroke="#f4f48e"/>
<circle cx="82.5" cy="361.5" r="2.1" fill="#2f7bb4" stroke="none"/>
<circle cx="177.5" cy="361.5" r="2.1" fill="#2f7bb4" stroke="none"/>
<rect x="88.5" y="358.5" width="7" height="7" stroke="#93f6f8"/>
<rect x="164.5" y="358.5" width="7" height="7" stroke="#93f6f8"/>
<path d="M110.5 336.5L113.5 340.5M113.5 336.5L110.5 340.5M114.5 337.5L116.5 336.5L116.5 340.5M114.5 340.5L117.5 340.5" stroke="#ffffff" stroke-width="1" stroke-linecap="round" stroke-linejoin="round"/>
<path d="M110.5 385.5L112.5 384.5L112.5 388.5M110.5 388.5L113.5 388.5M117.5 384.5L116.5 384.5L114.5 385.5L114.5 387.5L115.5 388.5L116.5 388.5L117.5 387.5L116.5 386.5L114.5 386.5M119.5 388.5L119.5 384.5L121 386.5L122.5 384.5L122.5 388.5M123.5 384.5L123.5 388.5M126.5 384.5L126.5 388.5M123.5 386.5L126.5 386.5M128.5 385.5L131.5 385.5L128.5 388.5L131.5 388.5" stroke="#ffffff" stroke-width="1" stroke-linecap="round" stroke-linejoin="round"/>
<path d="M82.5 380.5L82.5 399.5" stroke="#93f6f8" stroke-width="1"/>
<rect x="79.5" y="377.5" width="7" height="7" stroke="#93f6f8"/>
<path d="M63.5 399.5L101.5 399.5" stroke="#f4f48e" stroke-width="1"/>
<path d="M63.5 418.5L101.5 418.5" stroke="#f4f48e" stroke-width="1"/>
<path d="M49.5 409.5L51.5 408.5L51.5 412.5M49.5 412.5L52.5 412.5M54.5 408.5L55.5 408.5L56.5 409.5L55.5 410.5L54.5 410.5L53.5 409.5L54.5 408.5M54.5 410.5L53.5 411.5L54.5 412.5L55.5 412.5L56.5 411.5L55.5 410.5M58.5 409.5L58.5 413.5M58.5 410.5L59.5 409.5L60.5 409.5L61.5 410.5L61.5 411.5L60.5 412.5L59.5 412.5L58.5 411.5M66.5 408.5L63.5 408.5L63.5 412.5M63.5 410.5L65.5 410.5" stroke="#ffffff" stroke-width="1" stroke-linecap="round" stroke-linejoin="round" transform="rotate(-90 57.5 410.5)"/>
<path d="M108.5 408.5L107.5 407.5L106.5 407.5L105.5 408.5L105.5 410.5L106.5 411.5L107.5 411.5L108.5 410.5M110.5 408.5L111.5 407.5L112.5 407.5L113.5 408.5L113.5 409.5L110.5 411.5L113.5 411.5" stroke="#ffffff" stroke-width="1" stroke-linecap="round" stroke-linejoin="round" transform="rotate(-90 105.5 409.5)"/>
<path d="M82.5 418.5L82.5 437.5" stroke="#93f6f8" stroke-width="1"/>
<rect x="79.5" y="434.5" width="7" height="7" stroke="#93f6f8"/>
<path d="M177.5 380.5L177.5 399.5" stroke="#93f6f8" stroke-width="1"/>
<rect x="174.5" y="377.5" width="7" height="7" stroke="#93f6f8"/>
<path d="M158.5 399.5L196.5 399.5" stroke="#f4f48e" stroke-width="1"/>
<path d="M158.5 418.5L196.5 418.5" stroke="#f4f48e" stroke-width="1"/>
<path d="M144.5 409.5L146.5 408.5L146.5 412.5M144.5 412.5L147.5 412.5M149.5 408.5L150.5 408.5L151.5 409.5L150.5 410.5L149.5 410.5L148.5 409.5L149.5 408.5M149.5 410.5L148.5 411.5L149.5 412.5L150.5 412.5L151.5 411.5L150.5 410.5M153.5 409.5L153.5 413.5M153.5 410.5L154.5 409.5L155.5 409.5L156.5 410.5L156.5 411.5L155.5 412.5L154.5 412.5L153.5 411.5M161.5 408.5L158.5 408.5L158.5 412.5M158.5 410.5L160.5 410.5" stroke="#ffffff" stroke-width="1" stroke-linecap="round" stroke-linejoin="round" transform="rotate(-90 152.5 410.5)"/>
<path d="M203.5 408.5L202.5 407.5L201.5 407.5L200.5 408.5L200.5 410.5L201.5 411.5L202.5 411.5L203.5 410.5M205.5 408.5L206.5 407.5L207.5 407.5L208.5 408.5L207.5 409.5L206.5 409.5M207.5 409.5L208.5 410.5L207.5 411.5L206.5 411.5L205.5 410.5" stroke="#ffffff" stroke-width="1" stroke-linecap="round" stroke-linejoin="round" transform="rotate(-90 200.5 409.5)"/>
<path d="M177.5 418.5L177.5 437.5" stroke="#93f6f8" stroke-width="1"/>
<rect x="174.5" y="434.5" width="7" height="7" stroke="#93f6f8"/>
<path d="M82.5 437.5L82.5 456.5L177.5 456.5L177.5 437.5" stroke="#2f7bb4" stroke-width="1"/>
<circle cx="129.5" cy="456.5" r="2.1" fill="#2f7bb4" stroke="none"/>
<path d="M129.5 456.5L129.5 475.5" stroke="#2f7bb4" stroke-width="1"/>
<path d="M129.5 475.5L129.5 486.5" stroke="#93f6f8" stroke-width="1"/>
<rect x="126.5" y="472.5" width="7" height="7" stroke="#93f6f8"/>
<path d="M405.5 447.5L414.5 456.5L405.5 466.5L395.5 456.5Z" stroke="#f4f48e" stroke-width="1.1"/>
<path d="M400.5 456.5L402 459.5L403.5 456.5M407.5 456.5L405.5 456.5L404.5 457.5L404.5 458.5L405.5 459.5L407.5 459.5M411.5 456.5L409.5 456.5L408.5 457.5L408.5 458.5L409.5 459.5L411.5 459.5" stroke="#93f6f8" stroke-width="1" stroke-linecap="round" stroke-linejoin="round" transform="rotate(-90 405.5 457.5)"/>
<path d="M405.5 466.5L405.5 486.5" stroke="#93f6f8" stroke-width="1"/>
<rect x="402.5" y="482.5" width="7" height="7" stroke="#93f6f8"/>
</svg></div>

 <!-- status -->
 <svg class="abs" style="left:39px;top:494.4px" width="15" height="17" viewBox="0 0 15 17"><path d="M1 1.5h8.5l4 4v10.5h-12.500z" fill="#fbfbfb" stroke="#aaa6a2"/><path d="M9.500 1.500v4h4" fill="#ececec" stroke="#aaa6a2"/><path d="M3.500 5.500h4M3.500 7.500h8M3.500 9.500h8M3.500 11.500h8M3.500 13.500h8" stroke="#bdbab7"/></svg>
<div class="txt" style="left:58.5px;top:494.5px;font-family:'Liberation Mono',monospace;font-size:13.33px;color:#4a4a4a;line-height:16px">Schematic</div>
<div class="abs" style="left:141px;top:490.5px;width:1px;height:24px;background:#d3cdc7"></div>
<div class="txt" style="left:150.200px;top:494.5px;font-family:'Liberation Mono',monospace;font-size:13.33px;color:#4a4a4a;line-height:16px">0.200 in</div>
<div class="abs" style="left:229.500px;top:490.5px;width:1px;height:24px;background:#d3cdc7"></div>
<div class="txt" style="left:239.400px;top:494.5px;font-family:'Liberation Mono',monospace;font-size:13.33px;color:#4a4a4a;line-height:16px;white-space:pre">   1.40,   1.20</div>
<div class="abs" style="left:34px;top:519px;width:621px;height:24px;background:#fff;border:1px solid #b9aea5;border-radius:1.5px"></div>
<div class="txt" style="left:39.500px;top:525.3px;font-family:'Liberation Mono',monospace;font-style:italic;font-size:12.03px;color:#1c7a1c;line-height:15px"># Click to select, Ctrl-click for next-nearest</div>


 <!-- right panel -->
 <div class="cell" style="left:663px;top:53.15px;font-size:14px;letter-spacing:0.372px;color:#4c4c4c;line-height:16.00px">Properties</div>
<div class="cell" style="left:667.2px;top:80.15px;font-size:14px;letter-spacing:0.305px;color:#4c4c4c;line-height:16.00px">Symbol</div>
<div class="cell" style="left:663px;top:369.15px;font-size:14px;letter-spacing:0.333px;color:#4c4c4c;line-height:16.00px">Layers</div>
<div class="abs" style="left:667px;top:103px;width:181px;height:250px;background:#fff;border:1px solid #bdb3aa;overflow:hidden" id="ptab">
<div class="abs" style="left:0;top:0;width:166px;height:25px;background:linear-gradient(#fdfdfd,#f1efee);border-bottom:1px solid #c4bbb3"></div>
<div class="abs" style="left:51px;top:0;width:1px;height:249px;background:#d5cfc9"></div>
<div class="abs" style="left:51px;top:0;width:1px;height:25px;background:#c4bbb3"></div>
<div class="abs" style="left:165px;top:0;width:1px;height:249px;background:#d5cfc9"></div>
<div class="abs" style="left:0;top:54px;width:166px;height:1px;background:#d5cfc9"></div>
<div class="abs" style="left:0;top:84px;width:166px;height:1px;background:#d5cfc9"></div>
<div class="abs" style="left:0;top:114px;width:166px;height:1px;background:#d5cfc9"></div>
<div class="abs" style="left:0;top:144px;width:166px;height:1px;background:#d5cfc9"></div>
<div class="abs" style="left:0;top:174px;width:166px;height:1px;background:#d5cfc9"></div>
<div class="abs" style="left:0;top:204px;width:166px;height:1px;background:#d5cfc9"></div>
<div class="abs" style="left:0;top:234px;width:166px;height:1px;background:#d5cfc9"></div>
<div class="abs" style="left:166px;top:0;width:13px;height:248px;background:linear-gradient(90deg,#d9d4cf,#e9e6e3 40%,#e4e0dc)"></div>
<div class="abs" style="left:166px;top:0;width:13px;height:14px;background:linear-gradient(90deg,#fafafa,#efedeb);border:1px solid #b3a9a0;border-radius:6px 6px 0 0;border-bottom:none"></div>
<div class="abs" style="left:166px;top:234px;width:13px;height:14px;background:linear-gradient(90deg,#fafafa,#efedeb);border:1px solid #b3a9a0;border-radius:0 0 6px 6px;border-top:none"></div>
<div class="abs" style="left:166px;top:13px;width:13px;height:194px;background:linear-gradient(90deg,#ffffff,#f3f2f1 50%,#e2dfdc);border:1px solid #a89e96;border-radius:6px"></div>
<svg class="abs" style="left:166px;top:0" width="13" height="248"><path d="M4 10.5l2.5-3 2.5 3z" fill="#9a9a9a"/><path d="M3.500 239.500h6l-3 3.600z" fill="#4c4c4c"/><path d="M5 107.500h3M5 110.500h3M5 113.500h3" stroke="#9c948d" stroke-width="1"/></svg>
</div>
<div class="cell" style="left:633.759px;width:120px;text-align:center;top:107.85px;font-size:14px;letter-spacing:0.118px;color:#3c3c3c;line-height:16.00px">Name</div>
<div class="cell" style="left:716.863px;width:120px;text-align:center;top:107.85px;font-size:14px;letter-spacing:0.127px;color:#3c3c3c;line-height:16.00px">Value</div>
<div class="cell" style="left:671.3px;top:134.55px;font-size:14px;letter-spacing:0.353px;color:#3c3c3c;line-height:16.00px">angle</div>
<div class="cell" style="left:723.6px;top:134.55px;font-size:14px;letter-spacing:0.330px;color:#3c3c3c;line-height:16.00px">0</div>
<div class="cell" style="left:671.3px;top:164.55px;font-size:14px;letter-spacing:0.330px;color:#3c3c3c;line-height:16.00px">lib</div>
<div class="cell" style="left:723.6px;top:164.55px;font-size:14px;letter-spacing:0.422px;color:#3c3c3c;line-height:16.00px">razen/lib-rcl</div>
<div class="cell" style="left:671.3px;top:194.55px;font-size:14px;letter-spacing:0.681px;color:#3c3c3c;line-height:16.00px">mirror</div>
<div class="cell" style="left:671.3px;top:224.55px;font-size:14px;letter-spacing:0.500px;color:#3c3c3c;line-height:16.00px">name</div>
<div class="cell" style="left:723.6px;top:224.55px;font-size:14px;letter-spacing:0.330px;color:#3c3c3c;line-height:16.00px">R2</div>
<div class="cell" style="left:671.3px;top:254.55px;font-size:14px;letter-spacing:0.330px;color:#3c3c3c;line-height:16.00px">part</div>
<div class="cell" style="left:723.6px;top:254.55px;font-size:14px;letter-spacing:0.177px;color:#3c3c3c;line-height:16.00px">r_s1608</div>
<div class="cell" style="left:671.3px;top:284.55px;font-size:14px;letter-spacing:0.330px;color:#3c3c3c;line-height:16.00px">pos</div>
<div class="cell" style="left:723.6px;top:284.55px;font-size:14px;letter-spacing:0.487px;color:#3c3c3c;line-height:16.00px">(13970, -3810)</div>
<div class="cell" style="left:671.3px;top:314.55px;font-size:14px;letter-spacing:0.330px;color:#3c3c3c;line-height:16.00px">rev</div>
<div class="cell" style="left:723.6px;top:314.55px;font-size:14px;letter-spacing:0.330px;color:#3c3c3c;line-height:16.00px">17</div>
<div class="abs" style="left:668px;top:339px;width:166px;height:13px;overflow:hidden"><div class="cell" style="left:3.3px;top:6.5px;font-size:14px;letter-spacing:.33px;line-height:16px">value</div><div class="cell" style="left:55.6px;top:6.5px;font-size:14px;letter-spacing:.33px;line-height:16px">68</div></div>
<div class="abs" style="left:723px;top:196px;width:14px;height:14px;background:linear-gradient(#fff,#f6f5f4);border:1px solid #b5aaa0;border-radius:3px"></div>
<svg class="abs" style="left:752px;top:359px" width="12" height="6"><path d="M2.5 1v4M5.5 1v4M8.5 1v4" stroke="#c9c2bb"/></svg>
<svg class="abs" style="left:655px;top:293px" width="6" height="14"><path d="M1 2.5h4M1 5.5h4M1 8.5h4" stroke="#c9c2bb"/></svg>
<div class="abs" style="left:667px;top:396px;width:181px;height:147px;background:#fff;border:1px solid #bdb3aa"></div>
<div class="abs" style="left:669px;top:398px;width:18px;height:22px;background:#9bfdfd"></div>
<div class="abs" style="left:668px;top:420px;width:179px;height:1px;background:#cbc5bf"></div>
<div class="cell" style="left:691.5px;top:400.00px;font-size:14px;letter-spacing:0.330px;color:#1a1a1a;line-height:16.00px">Pin</div>
<div class="abs" style="left:669px;top:422px;width:18px;height:22px;background:#ffff99"></div>
<div class="abs" style="left:668px;top:444px;width:179px;height:1px;background:#cbc5bf"></div>
<div class="cell" style="left:691.5px;top:424.00px;font-size:14px;letter-spacing:0.330px;color:#1a1a1a;line-height:16.00px">Symbol</div>
<div class="abs" style="left:669px;top:446px;width:18px;height:22px;background:#2e7ab1"></div>
<div class="abs" style="left:668px;top:468px;width:179px;height:1px;background:#cbc5bf"></div>
<div class="cell" style="left:691.5px;top:448.00px;font-size:14px;letter-spacing:0.330px;color:#1a1a1a;line-height:16.00px">Net</div>
<div class="abs" style="left:669px;top:470px;width:18px;height:22px;background:#ffffff"></div>
<div class="abs" style="left:668px;top:492px;width:179px;height:1px;background:#cbc5bf"></div>
<div class="cell" style="left:691.5px;top:472.00px;font-size:14px;letter-spacing:0.330px;color:#1a1a1a;line-height:16.00px">Label</div>
<div class="abs" style="left:668px;top:397px;width:179px;height:1px;background:#e2ded9"></div>
<div class="abs" style="left:687px;top:397px;width:1px;height:96px;background:#cbc5bf"></div>
<div class="abs" style="left:668px;top:397px;width:1px;height:96px;background:#cbc5bf"></div>
<div class="abs" style="left:846px;top:397px;width:1px;height:96px;background:#cbc5bf"></div>
</div>
</body></html>
